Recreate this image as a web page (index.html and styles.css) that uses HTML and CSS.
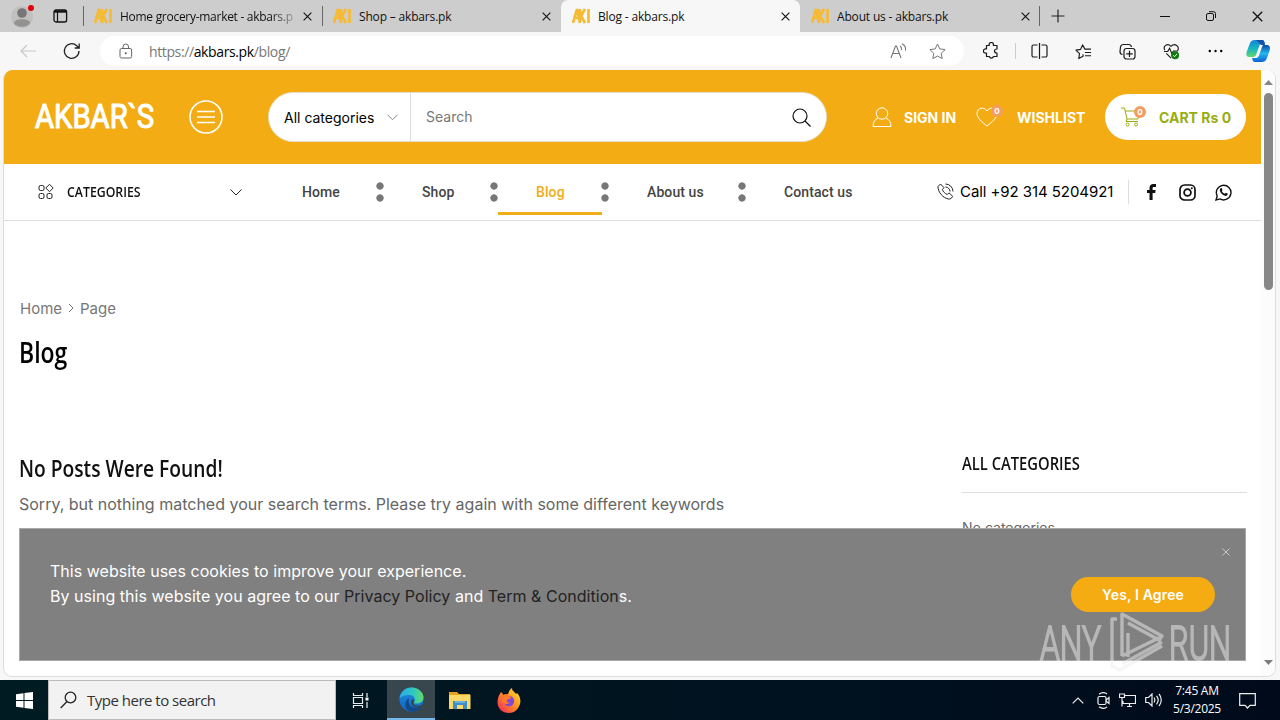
FILE: index.html
```html
<!DOCTYPE html>
<html lang="en">
  <head>
    <meta charset="UTF-8" />
    <meta name="viewport" content="width=device-width, initial-scale=1.0" />
    <title>Blog - akbars.pk</title>
    <link rel="stylesheet" href="styles.css">
  </head>
  <body>
    <svg class="defs" width="0" height="0">
      <symbol id="favicon" viewBox="0 0 18 18">
        <path d="M1 16 5 2l3 14M3 11h4M8 2v14M13 2 9 9l4 7M16.500 2v14" fill="none" stroke="#f6bb33" stroke-width="2.700" />
      </symbol>
      <symbol id="x" viewBox="0 0 10 10">
        <path d="M.7.7l8.600 8.600M9.300.7.7 9.300" fill="none" stroke="currentColor" stroke-width="1.200" />
      </symbol>
    </svg>

    <div class="tabstrip">
      <svg class="profile" width="26" height="26" viewBox="0 0 26 26">
        <circle cx="12" cy="15" r="11" fill="#c2c0be" />
        <circle cx="12" cy="11" r="4.800" fill="#767676" />
        <path d="M4 21c0-5 16-5 16 0-2 5-14 5-16 0z" fill="#929292" />
        <circle cx="21" cy="6" r="3" fill="#e0000c" />
      </svg>
      <svg class="workspace" width="15" height="14" viewBox="0 0 15 14">
        <rect x="1" y="1" width="12.600" height="12" rx="2" fill="none" stroke="#111" stroke-width="1.300" />
        <path d="M1 2.500h12.500" fill="none" stroke="#111" stroke-width="2.400" />
        <path d="M4.500 3v10" stroke="#111" stroke-width="1.200" />
      </svg>
      <div class="tab tab-first"><svg class="fav"><use href="#favicon" /></svg><span class="tab-title fade">Home grocery-market - akbars.p</span><svg class="close"><use href="#x" /></svg></div>
      <div class="tab tab-second"><svg class="fav"><use href="#favicon" /></svg><span class="tab-title">Shop – akbars.pk</span><svg class="close"><use href="#x" /></svg></div>
      <div class="tab tab-active"><svg class="fav"><use href="#favicon" /></svg><span class="tab-title">Blog - akbars.pk</span><svg class="close"><use href="#x" /></svg></div>
      <div class="tab tab-last"><svg class="fav"><use href="#favicon" /></svg><span class="tab-title">About us - akbars.pk</span><svg class="close"><use href="#x" /></svg></div>
      <svg class="new-tab" width="14" height="14" viewBox="0 0 14 14"><path d="M7 .5v13M.5 7h13" stroke="#222" stroke-width="1.200" /></svg>
      <div class="window-buttons">
        <svg width="10" height="10"><path d="M0 5.500h10" stroke="#111" /></svg>
        <svg width="10" height="10" viewBox="0 0 10 10"><rect x=".5" y="2.500" width="7" height="7" rx="1.500" fill="none" stroke="#111" /><path d="M3 .7h4.500a2 2 0 0 1 2 2V7" fill="none" stroke="#111" /></svg>
        <svg width="11" height="11" color="#111"><use href="#x" /></svg>
      </div>
    </div>

    <div class="toolbar">
      <svg class="back" width="16" height="14" viewBox="0 0 16 14"><path d="M7 1 1 7l6 6M1 7h15" fill="none" stroke="#c8c8c8" stroke-width="1.200" /></svg>
      <svg class="reload" width="18" height="18" viewBox="0 0 18 18"><path d="M16 9a7.300 7.300 0 1 1-2.300-5.300L16 6M16.200 1.500V6h-4.500" fill="none" stroke="#222" stroke-width="1.300" /></svg>
      <div class="address">
        <svg class="lock" width="14" height="16" viewBox="0 0 14 16"><rect x="1" y="5.500" width="11.600" height="9.500" rx="1.500" fill="none" stroke="#666" /><path d="M4 5.500V4a2.800 3 0 0 1 5.600 0v1.500" fill="none" stroke="#666" /><circle cx="6.800" cy="10.200" r="1" fill="#555" /></svg>
        <span class="url">https://<b>akbars.pk</b>/blog/</span>
        <svg class="read" width="17" height="16" viewBox="0 0 17 16"><path d="M1 15 5.500 3h1L11 15M2.700 10.500h6.600M10 3c1.500.9 1.700 2.300 1.500 4M12 .7c3 1.500 4 4 3.500 7" fill="none" stroke="#777" stroke-width="1.100" /></svg>
        <svg class="star" width="17" height="17" viewBox="0 0 17 17"><path d="m8.500 1 2.300 4.900 5.300.7-3.900 3.700 1 5.300-4.700-2.600-4.700 2.600 1-5.300L.9 6.600l5.300-.7z" fill="none" stroke="#777" stroke-linejoin="round" /></svg>
      </div>
      <div class="tools">
        <svg width="17" height="18" viewBox="0 0 17 18"><path d="M3.500 3.500h2.800a2.200 2.200 0 1 1 4 0H14V7c-2 0-2.500 1-2.500 2s.5 2 2.500 2v3.500h-3.500a2.200 2.200 0 0 1-4.200 0H3.500V11a2.200 2.200 0 1 1 0-4z" fill="none" stroke="#1b1b1b" stroke-width="1.200" stroke-linejoin="round" /></svg>
        <i></i>
        <svg width="17" height="16" viewBox="0 0 17 16"><path d="M6.500 2h-4A1.500 1.500 0 0 0 1 3.500v9A1.500 1.500 0 0 0 2.500 14h4M10.500 2h4A1.500 1.500 0 0 1 16 3.500v9a1.500 1.500 0 0 1-1.500 1.500h-4M8.500 0v16" fill="none" stroke="#1b1b1b" stroke-width="1.200" /></svg>
        <svg width="17" height="17" viewBox="0 0 18 18"><path d="M8.500 12v2L4 16.500l.8-5.300L1 7.500l5-.8L8 2l2.500 4.500H17M10.500 10H17M10.500 13.500H17" fill="none" stroke="#1b1b1b" stroke-width="1.200" stroke-linejoin="round" /></svg>
        <svg width="17" height="17" viewBox="0 0 17 17"><path d="M3.500 11.500A3 3 0 0 1 1 8.500L1.500 4a3 3 0 0 1 3-2.500h5A3 3 0 0 1 12.500 4" fill="none" stroke="#1b1b1b" stroke-width="1.200" /><rect x="5" y="5.500" width="11" height="10.500" rx="2.500" fill="none" stroke="#1b1b1b" stroke-width="1.200" /><path d="M10.500 7.700V14M7.300 10.800h6.400" stroke="#1b1b1b" stroke-width="1.200" /></svg>
        <svg width="17" height="17" viewBox="0 0 18 17"><path d="M2 7C-.5 3 4.500-1 8.500 3c4-4 9.500 0 7 4.500M1 8.500h4L7 5l2.500 6L11 8h5M3.500 10.500l5 5" fill="none" stroke="#1b1b1b" stroke-width="1.200" /><circle cx="12.800" cy="12.500" r="4.200" fill="#107c10" /><path d="m10.800 12.600 1.500 1.400 2.600-3" fill="none" stroke="#fff" /></svg>
        <svg width="17" height="4" viewBox="0 0 17 4"><circle cx="2.800" cy="2" r="1.200" /><circle cx="8.500" cy="2" r="1.200" /><circle cx="14.200" cy="2" r="1.200" /></svg>
      </div>
      <svg class="copilot" width="24" height="24" viewBox="0 0 24 24">
        <defs>
          <linearGradient id="cp1" x2="0" y2="1"><stop stop-color="#1584d8" /><stop offset=".5" stop-color="#15b5c4" /><stop offset="1" stop-color="#62d76c" /></linearGradient>
          <linearGradient id="cp2" x2="0" y2="1"><stop stop-color="#0c4aa4" /><stop offset=".5" stop-color="#24b7ef" /><stop offset="1" stop-color="#0d62d2" /></linearGradient>
        </defs>
        <path d="M9 1h7c2 0 2.500 2 3 4h-5l-4 11c-1 1.500-2 2-3 2H3c-3 0-3-3-2-6l3-8c1-2 2-3 5-3z" fill="url(#cp1)" />
        <path d="M17 6h4c3 0 3.500 3 2.500 6l-3 8c-1 2-2 3-5 3H9c-2 0-2.500-2-3-4h4c2 0 3-2 3.500-4L16 8z" fill="url(#cp2)" />
        <path d="M10 1h6c2 0 2.500 2 3 5h-4z" fill="#1254ac" />
      </svg>
    </div>

    <div class="viewport">
      <div class="page">
        <header class="header">
          <svg class="logo" width="124" height="46" viewBox="0 0 124 46"><text x="2" y="34" textLength="119" lengthAdjust="spacingAndGlyphs">AKBAR`S</text></svg>
          <svg class="burger" width="34" height="34" viewBox="0 0 34 34"><circle cx="17" cy="17" r="16" /><path d="M8 11.500h18M8 17h18M8 22.500h18" /></svg>
          <form class="search">
            <span class="search-cat">All categories</span>
            <svg class="chev" width="11" height="7" viewBox="0 0 11 7"><path d="m.5.700 5 5 5-5" /></svg>
            <span class="search-text">Search</span>
            <svg class="lens" width="19" height="19" viewBox="0 0 19 19"><circle cx="8" cy="8" r="7" /><path d="m13 13 5.500 5.500" /></svg>
          </form>
          <a class="sign-in">
            <svg width="20" height="21" viewBox="0 0 20 21"><circle cx="10" cy="6.500" r="5.700" /><path d="M6 11c-3 1.500-5 4-5 8.500h18c0-4.500-2-7-5-8.500" /></svg>
            <span>SIGN IN</span>
          </a>
          <a class="wishlist">
            <svg width="22" height="20" viewBox="0 0 22 20"><path d="M11 4C8-1 1 1 1 6.500 1 11 6 15 11 19c5-4 10-8 10-12.500C21 1 14-1 11 4z" /></svg>
            <em class="badge">0</em>
            <span>WISHLIST</span>
          </a>
          <a class="cart">
            <svg width="20" height="20" viewBox="0 0 20 20"><path d="M0 1h3.500L6 12h11l1.800-8H4.200M6 12l-1 2.500h12" /><circle cx="6.500" cy="17.500" r="1.500" /><circle cx="15" cy="17.500" r="1.500" /></svg>
            <em class="badge">0</em>
            <span>CART Rs 0</span>
          </a>
        </header>

        <nav class="nav">
          <svg class="grid-icon" width="16" height="16" viewBox="0 0 16 16"><rect x="1" y="1.500" width="5" height="5" rx="1.500" /><rect x="1" y="9.500" width="5" height="5" rx="1.500" /><rect x="9" y="9.500" width="5" height="5" rx="1.500" /><path d="m11.500.3 3.700 3.700-3.700 3.700L7.800 4z" /></svg>
          <span class="nav-title"><b class="dosis">CATEGORIES</b></span>
          <svg class="chev dark" width="12" height="7" viewBox="0 0 12 7"><path d="m.5.500 5.500 5.500 5.500-5.500" /></svg>
          <ul class="menu">
            <li class="m-home">Home</li>
            <li class="m-shop">Shop</li>
            <li class="m-blog">Blog</li>
            <li class="m-about">About us</li>
            <li class="m-contact">Contact us</li>
          </ul>
          <div class="call">
            <svg width="17" height="17" viewBox="0 0 17 17"><path d="M1 3.500 3.500 1 7 4.700 5.300 6.500c1 2.300 2.500 4 5 5l1.700-1.700 3.700 3.500c-1 2-2.500 3-4 2.700C6 15 1 9.500 1 3.500zM8.500 1A7.500 7.500 0 0 1 16 8.500M8.500 4a4.500 4.500 0 0 1 4.500 4.500" /></svg>
            <span>Call +92 314 5204921</span>
          </div>
          <div class="social">
            <svg width="17" height="16" viewBox="-4 0 17 16"><path d="M2.500 16V9H0V6h2.500V4C2.500 1.300 4 0 6.300 0H9v3H7C6 3 5.600 3.300 5.600 4.200V6h3l-.4 3H5.600v7z" fill="#111" /></svg>
            <svg width="17" height="17" viewBox="0 0 17 17"><rect x="1" y="1" width="15" height="15" rx="4.500" fill="none" stroke="#111" stroke-width="1.700" /><circle cx="8.500" cy="8.500" r="3.400" fill="none" stroke="#111" stroke-width="1.800" /><circle cx="12.800" cy="4.200" r="1" fill="#111" /></svg>
            <svg width="17" height="17" viewBox="0 0 17 17"><path d="m1 16 1.200-4A7.300 7.300 0 1 1 5 14.900z" fill="none" stroke="#111" stroke-width="1.400" /><path d="M5.500 4.500c.8-.7 1.300-.4 1.600.5l.4 1-.7 1c.7 1.400 1.600 2.200 3 2.800l1-1 2 1c0 1.500-1.300 2.400-2.800 2C7.400 11 5 8.400 4.800 6.200c0-.7.300-1.300.7-1.700z" fill="#111" /></svg>
          </div>
        </nav>

        <div class="breadcrumb">Home <svg width="6" height="10" viewBox="0 0 6 10"><path d="m1 1 4 4-4 4" fill="none" stroke="#777" /></svg> Page</div>
        <h1><b class="dosis">Blog</b></h1>

        <div class="content">
          <main>
            <h2><b class="dosis">No Posts Were Found!</b></h2>
            <p>Sorry, but nothing matched your search terms. Please try again with some different keywords</p>
          </main>
          <aside>
            <h3><b class="dosis">ALL CATEGORIES</b></h3>
            <p>No categories</p>
          </aside>
        </div>
      </div>

      <div class="scrollbar">
        <svg width="9" height="5"><path d="M0 5 4.500 0 9 5z" fill="#868686" /></svg>
        <div class="thumb"></div>
        <svg width="9" height="5"><path d="M0 0l4.500 5L9 0z" fill="#7d7d7d" /></svg>
      </div>

      <div class="cookie">
        <p>This website uses cookies to improve your experience.<br>By using this website you agree to our <a>Privacy Policy</a> and <a>Term &amp; Condition</a>s.</p>
        <button type="button">Yes, I Agree</button>
        <svg class="cookie-close" width="8" height="8"><use href="#x" /></svg>
      </div>
    </div>

    <svg class="watermark" width="210" height="70" viewBox="0 0 210 70">
      <text x="4" y="51" textLength="61" lengthAdjust="spacingAndGlyphs">ANY</text>
      <text x="133" y="51" textLength="62" lengthAdjust="spacingAndGlyphs">RUN</text>
      <path d="M81 10h-5v47l8 4 42-24M86 47V5l40 22-3 4-31-17M86 47l39-19M92 24v24M86 55l40-22" />
    </svg>

    <div class="taskbar">
      <div class="start"><svg width="17" height="17" viewBox="0 0 17 17"><path d="M0 2.300 7.500 1.200V8H0zM8.500 1 17 0v8H8.500zM0 9h7.500v6.800L0 14.700zM8.500 9H17v8l-8.500-1.100z" fill="#fff" /></svg></div>
      <div class="task-search">
        <svg width="17" height="18" viewBox="0 0 17 18"><circle cx="10.500" cy="6.500" r="5.300" fill="none" stroke="#222" stroke-width="1.300" /><path d="M7 10.500.7 17" stroke="#222" stroke-width="1.300" /></svg>
        <span>Type here to search</span>
      </div>
      <div class="task"><svg width="18" height="17" viewBox="0 0 18 17"><path d="M1.500 1v2.500h9V1M1.500 16v-2.500h9V16M1.500 5.500h9v6h-9zM15 1v4M15 10v6" fill="none" stroke="#e8eeee" stroke-width="1.200" /><path d="M13.500 5.500h3v3h-3z" fill="#fff" /></svg></div>
      <div class="task task-active">
        <svg width="25" height="25" viewBox="0 0 25 25">
          <defs>
            <linearGradient id="e1"><stop stop-color="#29a9e8" /><stop offset=".55" stop-color="#2fc7c4" /><stop offset="1" stop-color="#62dc66" /></linearGradient>
            <linearGradient id="e2" x2="0" y2="1"><stop stop-color="#1f8fe0" /><stop offset="1" stop-color="#1265c0" /></linearGradient>
          </defs>
          <circle cx="12.500" cy="12.500" r="12" fill="url(#e2)" />
          <path d="M.5 12C1 5 6 .5 12.500.5S25 5.500 24.500 11c-.5 5-6 6.500-10 5 3-3 1-8-4-8C6 8 2 9.500.5 12z" fill="url(#e1)" />
          <path d="M10 11c-2 8 4 12 13 8-3 5-8 6-12 5.500C5 22 5 14 10 11z" fill="#114a8c" />
          <path d="M14.500 16c-1 2.500 5 4 9 1.500l1.500-5v7l-2 .3c-5 1.500-11 0-11-4.300 0-2 1-3 2-3.500 1.500 1 1.500 2.500.5 4z" fill="#37474d" />
        </svg>
      </div>
      <div class="task"><svg width="22" height="19" viewBox="0 0 22 19"><path d="M0 1h8l2 2h11v4H0z" fill="#e8a31c" /><path d="M0 4h21.500v14H0z" fill="#fbd868" /><path d="M4 18v-8h14v8h-4v-4H8v4z" fill="#3f8fc6" /><path d="M6 10h10v2H6z" fill="#66b4dd" /></svg></div>
      <div class="task">
        <svg width="24" height="25" viewBox="0 0 24 25">
          <defs><linearGradient id="ff" x1="1" x2="0" y2="1"><stop stop-color="#ffec3d" /><stop offset=".45" stop-color="#ff9320" /><stop offset="1" stop-color="#f31f62" /></linearGradient></defs>
          <path d="M4 4c1 1 2 1.500 2 3l5-1c1-3 2-5 4-6 0 3 2 3 4 6l1-1c3 3 4 7 3 11-2 6-6 9-11 9C5 25 0 20 .5 13 1 9 2 7 4 4z" fill="url(#ff)" />
          <circle cx="12" cy="13" r="5.200" fill="#8047d8" />
          <path d="M6 7c2-1 5-1 6 1 1 0 2 1 2 2-1 1-3 1-4 2-1 2 1 3 3 2-1 3-8 3-8-2z" fill="#ff7b2b" />
        </svg>
      </div>
      <div class="tray">
        <svg width="12" height="7" viewBox="0 0 12 7"><path d="M.7 6.300 6 1l5.300 5.300" /></svg>
        <svg width="13" height="17" viewBox="0 0 13 17"><rect x="1" y="4.500" width="8" height="8" rx="1.500" /><path d="m9 8 3-2.500v6L9 9M2 2.200c3-2 6-2 8 0M2 14.800c3 2 6 2 8 0" /></svg>
        <svg width="17" height="15" viewBox="0 0 17 15"><path d="M6 2.500h10.500v8H4V8M8 13.500h5M10.500 10.500v3M.5 1h5v3.500h-5zM3 4.500v9" /></svg>
        <svg width="17" height="14" viewBox="0 0 17 14"><path d="M.7 4.500v5h2.800L7 13V1L3.500 4.500zM9 4.500c1 1.500 1 3.500 0 5M11.500 2.800c2 2.500 2 6 0 8.500M14 1c3 3.500 3 8.500 0 12" /></svg>
      </div>
      <div class="clock"><span>7:45 AM</span><span>5/3/2025</span></div>
      <svg class="notice" width="17" height="16" viewBox="0 0 17 16"><path d="M.7.700h15.600v11.600H11L8.500 15 6 12.300H.7z" /></svg>
    </div>
  </body>
</html>
```
FILE: styles.css
```css
* {
  box-sizing: border-box;
}

body {
  margin: 0;
  width: 1280px;
  height: 720px;
  overflow: hidden;
  display: flex;
  flex-direction: column;
  position: relative;
  background: #f7f7f7;
  font-family: "Open Sans", "Noto Sans", sans-serif;
}

svg {
  flex: none;
  display: block;
}

.defs {
  position: absolute;
}

/* Browser tabs */
.tabstrip {
  height: 32px;
  flex: none;
  display: flex;
  align-items: center;
  background: #cdcdcd;
}

.profile {
  margin: 0 0 2px 10px;
}

.workspace {
  margin: 0 23px 0 17px;
}

.tab {
  width: 239px;
  height: 32px;
  display: flex;
  align-items: center;
  padding: 0 9px 0 11px;
  font-size: 12px;
  letter-spacing: -0.17px;
  color: #111;
}

.tab-first,
.tab-second {
  background: linear-gradient(#666, #666) left center / 1px 20px no-repeat;
}

.tab-first {
  margin-left: -8px;
}

.tab-active {
  background: #f7f7f7;
  border-radius: 7px 7px 0 0;
}

.tab-last {
  width: 240px;
  background: linear-gradient(#666, #666) right center / 1px 20px no-repeat;
}

.fav {
  width: 18px;
  height: 18px;
  margin-right: 8px;
}

.tab-title {
  flex: 1;
  overflow: hidden;
  white-space: nowrap;
}

.fade {
  letter-spacing: -0.28px;
  -webkit-mask-image: linear-gradient(90deg, #000 87%, transparent 105%);
  mask-image: linear-gradient(90deg, #000 87%, transparent 105%);
}

.close {
  width: 9px;
  height: 9px;
  margin: 0 1px 0 10px;
}

.new-tab {
  margin-left: 11px;
}

.window-buttons {
  margin-left: auto;
  display: flex;
  align-items: center;
  gap: 36px;
  padding-right: 17px;
}

/* Address row */
.toolbar {
  height: 38px;
  flex: none;
  display: flex;
  align-items: center;
}

.back {
  margin-left: 20px;
}

.reload {
  margin-left: 27px;
}

.address {
  width: 864px;
  height: 30px;
  margin-left: 19px;
  padding: 0 18px 0 19px;
  border-radius: 15px;
  background: #fff;
  display: flex;
  align-items: center;
}

.url {
  margin-left: 16px;
  margin-right: auto;
  font-size: 14px;
  letter-spacing: -0.38px;
  color: #777;
}

.url b {
  font-weight: normal;
  color: #000;
}

.read {
  margin-right: 22px;
}

.tools {
  display: flex;
  align-items: center;
  gap: 27px;
  width: 241px;
  margin-left: 19px;
}

.tools i {
  width: 1px;
  height: 16px;
  margin: 0 -12px;
  background: #ccc;
}

.copilot {
  margin-left: 22px;
}

/* Web page area */
.viewport {
  position: relative;
  width: 1273px;
  height: 607px;
  margin-left: 3px;
  flex: none;
  display: flex;
  border: 1px solid #ddd;
  border-top: none;
  border-radius: 9px;
  overflow: hidden;
  background: #fff;
}

.page {
  width: 1257px;
  flex: none;
  font-family: Inter, sans-serif;
}

.header {
  height: 94px;
  display: flex;
  align-items: center;
  background: #f3ac13;
  padding-left: 29px;
}

.logo,
.watermark {
  overflow: visible;
}

.logo text {
  font: 400 33px Roboto, sans-serif;
  fill: #fff;
  stroke: #fff;
  stroke-width: 1.1;
  stroke-linejoin: round;
}

.burger {
  margin-left: 32px;
  fill: none;
  stroke: #fff;
  stroke-width: 1.6;
}

.search {
  width: 559px;
  height: 50px;
  margin: 0 0 0 45px;
  display: flex;
  align-items: center;
  border-radius: 25px;
  border: 1px solid #e5dccb;
  background: #fff;
  font-size: 14px;
}

.search-cat {
  width: 103px;
  margin-left: 15px;
}

.chev {
  fill: none;
  stroke: #888;
}

.dark {
  stroke: #222;
}

.search-text {
  height: 48px;
  line-height: 48px;
  margin-left: 12px;
  padding-left: 15px;
  border-left: 1px solid #ddd;
  color: #777;
  flex: 1;
}

.lens {
  margin-right: 15px;
  fill: none;
  stroke: #111;
  stroke-width: 1.2;
}

.sign-in,
.wishlist,
.cart {
  display: flex;
  align-items: center;
  color: #fff;
  font-size: 14px;
  font-weight: 700;
  white-space: nowrap;
}

.sign-in svg,
.wishlist svg,
.cart svg {
  fill: none;
  stroke: currentColor;
}

.sign-in {
  width: 104px;
  margin-left: 45px;
}

.sign-in svg {
  margin-right: 12px;
}

.wishlist {
  width: 129px;
  position: relative;
}

.wishlist svg {
  margin-right: 19px;
}

.badge {
  position: absolute;
  left: 15px;
  top: -2px;
  width: 12px;
  height: 12px;
  line-height: 12px;
  border-radius: 50%;
  background: #f39d62;
  color: #fff;
  font-size: 8px;
  font-style: normal;
  text-align: center;
}

.cart {
  position: relative;
  width: 141px;
  height: 46px;
  border-radius: 23px;
  padding-left: 16px;
  background: #fff;
  color: #98ad12;
}

.cart svg {
  margin-right: 18px;
}

.cart .badge {
  left: 29px;
  top: 12px;
}

/* Menu row */
.nav {
  height: 57px;
  display: flex;
  align-items: center;
  border-bottom: 1px solid #ddd;
  padding-left: 34px;
}

.grid-icon {
  fill: none;
  stroke: #222;
}

/* Narrow heading face */
.dosis {
  display: inline-block;
  font-family: "Open Sans", sans-serif;
  font-weight: 650;
  color: #111;
  white-space: nowrap;
  transform: scaleX(0.82);
  transform-origin: left center;
}

.nav-title {
  width: 163px;
  margin: 0 0 2px 13px;
  font-size: 15px;
}

.menu {
  display: flex;
  align-self: stretch;
  list-style: none;
  margin: 0 0 0 22px;
  padding: 0;
  font: 500 14px Roboto, sans-serif;
  letter-spacing: 0.1px;
  color: #444;
}

.menu li {
  display: flex;
  align-items: center;
  padding-left: 38px;
  background: radial-gradient(circle at 4px 4px, #777 3.3px, transparent 4px) right 18px / 8px 12px no-repeat,
    radial-gradient(circle at 4px 4px, #777 3.3px, transparent 4px) right 30px / 8px 12px no-repeat;
}

.m-home {
  width: 120px;
}

.m-shop {
  width: 114px;
}

.m-blog {
  width: 111px;
  position: relative;
  color: #f0ad1a;
}

.m-blog::after {
  content: "";
  position: absolute;
  left: 0;
  right: 7px;
  bottom: 5px;
  height: 3px;
  background: #f0ad1a;
}

.m-about {
  width: 137px;
}

.menu .m-contact {
  background: none;
  width: 150px;
}

.call {
  display: flex;
  align-items: center;
  gap: 6px;
  margin: 0 0 2px 41px;
  font-size: 15px;
  letter-spacing: -0.07px;
  white-space: nowrap;
  color: #000;
}

.call svg {
  fill: none;
  stroke: #222;
}

.social {
  display: flex;
  align-items: center;
  gap: 19px;
  height: 24px;
  margin-left: auto;
  margin-right: 29px;
  padding-left: 14px;
  border-left: 1px solid #ddd;
}

.breadcrumb {
  display: flex;
  align-items: center;
  gap: 6px;
  height: 24px;
  margin: 75px 0 0 16px;
  font-size: 15px;
  color: #777;
}

h1 {
  margin: 12px 0 0 15px;
  font-size: 28px;
  line-height: 40px;
}

h1 .dosis {
  color: #000;
}

.content {
  display: flex;
  margin-top: 74px;
}

main {
  width: 958px;
  padding-left: 15px;
}

h2 {
  margin: 4px 0 0;
  font-size: 24px;
  line-height: 34px;
}

h2 .dosis {
  transform: scaleX(0.8);
}

main p {
  margin: 6px 0 0;
  font-size: 16px;
  line-height: 24px;
  color: #666;
}

aside {
  width: 285px;
}

h3 {
  height: 46px;
  margin: 0;
  padding-top: 3px;
  border-bottom: 1px solid #ddd;
  font-size: 18px;
  line-height: 26px;
}

aside p {
  margin: 23px 0 0;
  font-size: 14px;
  line-height: 24px;
  color: #666;
}

.scrollbar {
  width: 15px;
  padding: 10px 0 11px;
  display: flex;
  flex-direction: column;
  align-items: center;
  background: #fcfcfc;
}

.thumb {
  width: 9px;
  height: 197px;
  margin: 8px 0 auto;
  border-radius: 5px;
  background: #878787;
}

.cookie {
  position: absolute;
  left: 15px;
  top: 458px;
  width: 1227px;
  height: 133px;
  padding: 0 30px;
  display: flex;
  align-items: flex-start;
  justify-content: space-between;
  border: 1px solid #a8a8a8;
  background: #808080;
  color: #fff;
  font-family: Inter, sans-serif;
}

.cookie p {
  margin: 30px 0 0;
  font-size: 16px;
  line-height: 25px;
  letter-spacing: 0.03px;
}

.cookie a {
  color: #222;
}

.cookie button {
  width: 144px;
  height: 35px;
  margin-top: 48px;
  padding: 0;
  border: none;
  border-radius: 18px;
  background: #f5ac13;
  color: #fff;
  font: 600 14px Inter, sans-serif;
  letter-spacing: 0.15px;
}

.cookie-close {
  position: absolute;
  right: 15px;
  top: 19px;
  color: #ccc;
}

.watermark {
  position: absolute;
  left: 1036px;
  top: 609px;
  opacity: 0.5;
}

.watermark text {
  font: 300 48px Roboto, sans-serif;
  fill: #eee;
  stroke: #eee;
  stroke-width: 2;
}

.watermark path {
  fill: none;
  stroke: #eee;
  stroke-width: 3.4;
  stroke-linejoin: round;
}

/* Taskbar */
.taskbar {
  height: 40px;
  margin-top: 3px;
  flex: none;
  display: flex;
  align-items: center;
  background: linear-gradient(90deg, #001b22, #001420 50%, #000a1b);
  color: #fff;
}

.start,
.task {
  width: 48px;
  height: 40px;
  display: flex;
  align-items: center;
  justify-content: center;
}

.task-search {
  width: 288px;
  height: 40px;
  padding-left: 11px;
  display: flex;
  align-items: center;
  gap: 10px;
  background: #f2f2f2;
  border: 1px solid #bbb;
  color: #333;
  font-size: 15px;
  letter-spacing: -0.5px;
}

.task {
  width: 49px;
}

.task-active {
  width: 48px;
  margin-left: 2px;
  background: #37474d;
  border-bottom: 2px solid #76b9ed;
}

.tray {
  display: flex;
  align-items: center;
  gap: 9px;
  margin-left: auto;
}

.tray svg:first-child {
  margin-right: 4px;
}

.tray svg,
.notice {
  fill: none;
  stroke: #eee;
  stroke-width: 1.2;
}

.clock {
  width: 70px;
  display: flex;
  flex-direction: column;
  align-items: center;
  font-size: 12px;
  line-height: 18px;
  letter-spacing: -0.25px;
}

.notice {
  margin: 2px 24px 0 7px;
}
```
